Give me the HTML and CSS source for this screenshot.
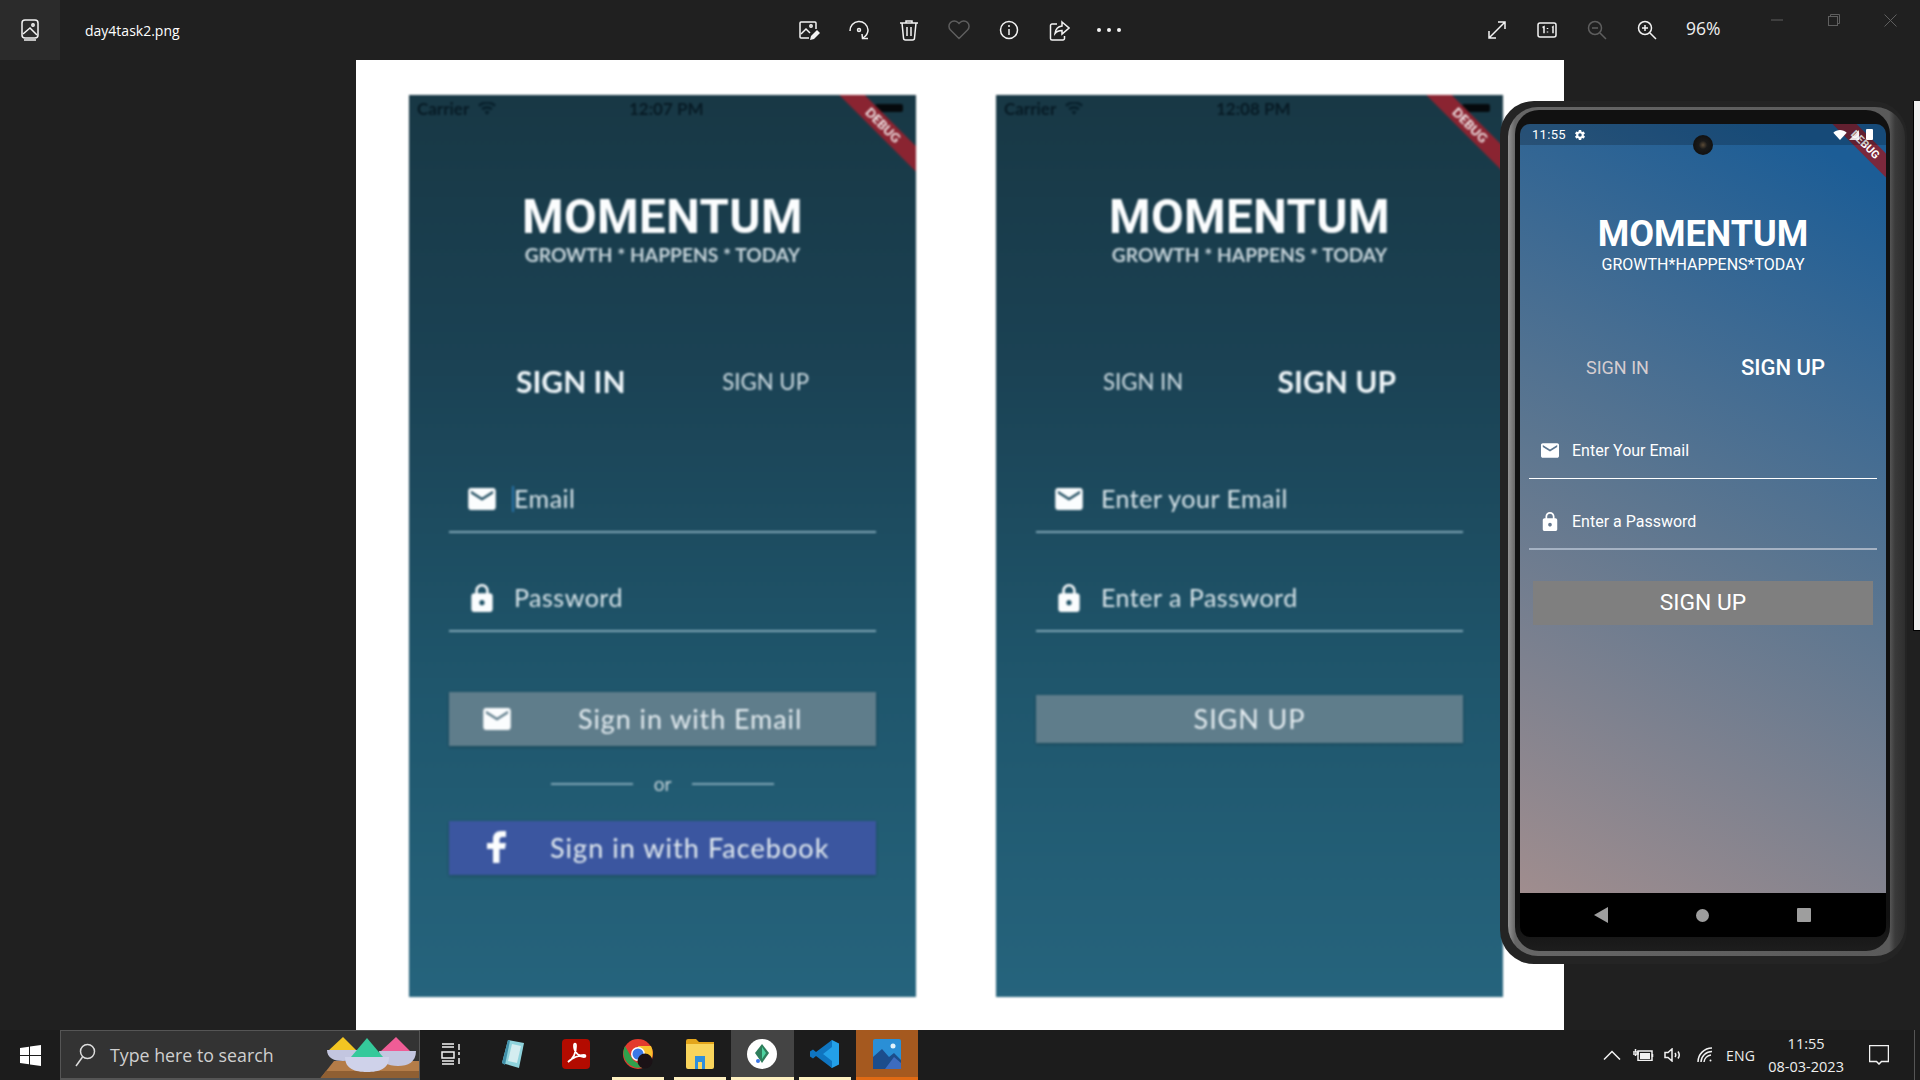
FILE: index.html
```html
<!DOCTYPE html>
<html lang="en">
<head>
<meta charset="utf-8">
<title>day4task2.png</title>
<link rel="stylesheet" href="styles.css">
</head>
<body>
<svg class="defs" width="0" height="0" aria-hidden="true">
  <symbol id="mail" viewBox="2 4 20 16"><path d="M20 4H4c-1.1 0-2 .9-2 2v12c0 1.1.9 2 2 2h16c1.1 0 2-.9 2-2V6c0-1.1-.9-2-2-2zm0 4l-8 5-8-5V6l8 5 8-5v2z"/></symbol>
  <symbol id="lock" viewBox="4 1 16 21"><path d="M18 8h-1V6c0-2.76-2.24-5-5-5S7 3.24 7 6v2H6c-1.1 0-2 .9-2 2v10c0 1.1.9 2 2 2h12c1.1 0 2-.9 2-2V10c0-1.1-.9-2-2-2zm-6 9c-1.1 0-2-.9-2-2s.9-2 2-2 2 .9 2 2-.9 2-2 2zm3.1-9H8.9V6c0-1.71 1.39-3.1 3.1-3.1 1.71 0 3.1 1.39 3.1 3.1v2z"/></symbol>
  <symbol id="wifi" viewBox="0 0 24 18"><path d="M12 18 0 5c6.600-6.600 17.400-6.600 24 0z"/></symbol>
  <symbol id="ioswifi" viewBox="0 0 18 13"><path d="M9 13 6.500 10a3.600 3.600 0 0 1 5 0zM5 8.300 3.200 6.300a8.500 8.500 0 0 1 11.600 0L13 8.300a6 6 0 0 0-8 0zM1.700 4.700 0 2.800a13 13 0 0 1 18 0l-1.700 1.900a10.500 10.500 0 0 0-14.600 0z"/></symbol>
</svg>

<div class="viewer">
  <header class="topbar">
    <div class="app-tile">
      <svg class="ico" width="20" height="22" viewBox="0 0 20 22"><rect x="2" y="1" width="16" height="18" rx="3"/><path d="M4 21h12"/><circle cx="13" cy="6" r="1.200"/><path d="M3 15l7-6 7 7"/></svg>
    </div>
    <div class="file-name">day4task2.png</div>
    <div class="tools">
      <span class="tool"><svg class="ico" width="22" height="22" viewBox="0 0 22 22"><path d="M11 19H3a1 1 0 0 1-1-1V4a1 1 0 0 1 1-1h14a1 1 0 0 1 1 1v6"/><path d="M3 15l5-5 4 4"/><circle cx="13" cy="7" r="1.200"/><path class="solid" d="M12 21l1-4 6-6 3 3-6 6z"/></svg></span>
      <span class="tool"><svg class="ico" width="22" height="22" viewBox="0 0 22 22"><path d="M2 12a9 9 0 1 1 18-1c0 3-2 6-5 8"/><path d="M14 15l.5 4.500H20"/><circle cx="11" cy="11" r="1.500"/></svg></span>
      <span class="tool"><svg class="ico" width="20" height="22" viewBox="0 0 20 22"><path d="M1 4h18M3 4l1.500 15a2 2 0 0 0 2 2h7a2 2 0 0 0 2-2L17 4M7 4V2h6v2M8 8v9M12 8v9"/></svg></span>
      <span class="tool dim"><svg class="ico" width="22" height="20" viewBox="0 0 22 20"><path d="M11 18.500 2.500 10a5.300 5.300 0 0 1 7.500-7.500l1 1 1-1A5.300 5.300 0 0 1 19.500 10z"/></svg></span>
      <span class="tool"><svg class="ico" width="20" height="20" viewBox="0 0 20 20"><circle cx="10" cy="10" r="8.500"/><path d="M10 9v6"/><path d="M10 5v2"/></svg></span>
      <span class="tool"><svg class="ico" width="21" height="21" viewBox="0 0 21 21"><path d="M8 4H3a1.500 1.500 0 0 0-1.500 1.500v13A1.500 1.500 0 0 0 3 20h11a1.500 1.500 0 0 0 1.500-1.500V16"/><path d="M13 2l7 6-7 6v-3.500c-3 0-5 .5-7 3 .5-4 3-7 7-7.500z"/></svg></span>
      <span class="tool dots"><i></i><i></i><i></i></span>
    </div>
    <div class="zooms">
      <span class="tool"><svg class="ico" width="20" height="20" viewBox="0 0 20 20"><path d="M2 18 18 2M11 2h7v7M2 11v7h7"/></svg></span>
      <span class="tool"><svg class="ico" width="20" height="16" viewBox="0 0 20 16"><rect x="1" y="1" width="18" height="14" rx="2"/><path d="M5.500 5.500 7 4.800v6.400M15 5.500l1-.7v6.400"/><path class="thin" d="M10.500 6v1M10.500 9.500v1"/></svg></span>
      <span class="tool dim"><svg class="ico" width="20" height="20" viewBox="0 0 20 20"><circle cx="8" cy="8" r="6.500"/><path d="M13 13l6 6M5 8h6"/></svg></span>
      <span class="tool"><svg class="ico" width="20" height="20" viewBox="0 0 20 20"><circle cx="8" cy="8" r="6.500"/><path d="M13 13l6 6M5 8h6M8 5v6"/></svg></span>
      <span class="zoom-level">96%</span>
    </div>
    <div class="win-controls">
      <span class="win"><svg class="ico" width="12" height="2" viewBox="0 0 12 2"><path d="M0 1h12"/></svg></span>
      <span class="win"><svg class="ico" width="12" height="12" viewBox="0 0 12 12"><rect x=".5" y="2.500" width="9" height="9"/><path d="M2.500 2.500V.5h9v9h-2"/></svg></span>
      <span class="win"><svg class="ico" width="13" height="13" viewBox="0 0 13 13"><path d="M.5.5l12 12M12.500.5l-12 12"/></svg></span>
    </div>
  </header>

  <main class="stage">
    <div class="picture">
      <section class="mock">
        <div class="ribbon">DEBUG</div>
        <div class="ios-status"><span class="carrier">Carrier <svg class="ios-wifi" width="18" height="13"><use href="#ioswifi"/></svg></span><span class="ios-time">12:07 PM</span><span class="ios-batt"></span></div>
        <h1 class="brand">MOMENTUM</h1>
        <p class="tagline">GROWTH * HAPPENS * TODAY</p>
        <div class="tabs"><span class="tab tab-on">SIGN IN</span><span class="tab">SIGN UP</span></div>
        <div class="field field-first"><svg class="f-ico"><use href="#mail"/></svg><span class="caret"></span><span class="f-text">Email</span></div>
        <div class="field"><svg class="f-ico f-lock"><use href="#lock"/></svg><span class="f-text">Password</span></div>
        <div class="btn btn-grey btn-email"><svg class="f-ico"><use href="#mail"/></svg><span>Sign in with Email</span></div>
        <div class="or"><i></i><span>or</span><i></i></div>
        <div class="btn btn-fb"><span class="fb-f"><svg width="20" height="32" viewBox="0 0 20 32"><path d="M6 32V18H0v-6h6V8c0-5 3-8 8-8h5v6h-3c-2.500 0-3.500 1-3.500 3v3H19l-1 6h-5.500v14z"/></svg></span><span>Sign in with Facebook</span></div>
      </section>

      <section class="mock">
        <div class="ribbon">DEBUG</div>
        <div class="ios-status"><span class="carrier">Carrier <svg class="ios-wifi" width="18" height="13"><use href="#ioswifi"/></svg></span><span class="ios-time">12:08 PM</span><span class="ios-batt"></span></div>
        <h1 class="brand">MOMENTUM</h1>
        <p class="tagline">GROWTH * HAPPENS * TODAY</p>
        <div class="tabs"><span class="tab">SIGN IN</span><span class="tab tab-on">SIGN UP</span></div>
        <div class="field field-first"><svg class="f-ico"><use href="#mail"/></svg><span class="f-text">Enter your Email</span></div>
        <div class="field"><svg class="f-ico f-lock"><use href="#lock"/></svg><span class="f-text">Enter a Password</span></div>
        <div class="btn btn-grey btn-signup"><span>SIGN UP</span></div>
      </section>
    </div>
  </main>

  <footer class="taskbar">
    <span class="start"><svg width="21" height="21" viewBox="0 0 21 21"><path fill="#fff" d="M0 3l9-1.300V10H0zM10 1.500 21 0v10H10zM0 11h9v8.300L0 18zM10 11h11v10l-11-1.500z"/></svg></span>
    <div class="search">
      <svg class="ico" width="22" height="24" viewBox="0 0 22 24"><circle cx="13.500" cy="8.500" r="7"/><path d="M8.500 14 2 23"/></svg>
      <span class="search-text">Type here to search</span>
      <svg class="holi" width="100" height="50" viewBox="0 0 100 50"><path fill="#b47c48" d="M0 50 15 31h85v19z"/><path fill="#8f5f33" d="M0 50l7-9h93v9z"/><path fill="#f2c522" d="M9 21 24 7l14 14v4H9z"/><path fill="#c3c6e0" d="M8 20h31c0 8-6 11-15 11S8 28 8 20z"/><path fill="#ef5d96" d="M61 22 77 7l15 15v4H61z"/><path fill="#c3c6e0" d="M60 21h37c0 11-8 15-18 15s-19-4-19-15z"/><path fill="#35c99b" d="M32 27 48 8l16 19v3H32z"/><path fill="#cfd2ea" d="M26 27h44c0 12-10 15-22 15s-22-3-22-15z"/></svg>
    </div>
    <div class="task-items">
      <span class="task"><svg class="ico" width="20" height="22" viewBox="0 0 20 22"><path d="M1 1h12M1 4h12M1 9h12v6H1zM1 18h12M1 21h12M18 1v6M18 9v3M18 15v6"/></svg></span>
      <span class="task"><svg width="26" height="30" viewBox="0 0 26 30"><path fill="#8fd3dc" d="M8 1l16 3-5 25L2 24z"/><path fill="#3f8fa8" d="M2 24l6-23 2 .4L5 26z"/><path fill="#d4edf0" d="M12 5l9 2-4 17-9-2z"/></svg></span>
      <span class="task"><svg width="28" height="30" viewBox="0 0 28 30"><rect width="28" height="30" rx="4" fill="#b30b00"/><path fill="none" stroke="#fff" stroke-width="1.800" d="M6 23c5-3 8-9 8-16 0-3-2-3-2 0 0 6 5 11 10 11 2 0 2-2 0-2-5 0-12 3-16 7z"/></svg></span>
      <span class="task task-open"><svg width="32" height="32" viewBox="0 0 32 32"><circle cx="16" cy="16" r="15" fill="#e33b2e"/><path fill="#f9c22e" d="M16 8h13a15 15 0 0 1-8 21z"/><path fill="#2fa14c" d="M3 8l8 14 10 7A15 15 0 0 1 3 8z"/><circle cx="16" cy="16" r="7" fill="#fff"/><circle cx="16" cy="16" r="5.500" fill="#3b78e7"/><circle cx="23" cy="23" r="7.500" fill="#1b1216"/></svg></span>
      <span class="task task-open"><svg width="28" height="30" viewBox="0 0 28 30"><path fill="#e3a51b" d="M0 2a2 2 0 0 1 2-2h8l3 3h15v5H0z"/><path fill="#f9d55c" d="M0 5h28v23a2 2 0 0 1-2 2H2a2 2 0 0 1-2-2z"/><path fill="#2f8fdc" d="M9 17h10v13h-3v-7h-4v7H9z"/></svg></span>
      <span class="task task-active task-open"><svg width="30" height="30" viewBox="0 0 30 30"><circle cx="15" cy="15" r="15" fill="#fff"/><path fill="#2e7d5b" d="M15 5l7 9-7 10-7-10z"/><path fill="#4cd3a0" d="M15 8l4 6-4 6z"/><circle cx="11" cy="22" r="2" fill="#3b78e7"/></svg></span>
      <span class="task task-open"><svg width="30" height="30" viewBox="0 0 30 30"><path fill="#23a0e8" d="M22 1l7 3.500v21L22 29 9 17z"/><path fill="#0f75c0" d="M22 8 13 15l9 7v7L6 17l-3 2.500L0 17.500v-5L3 10.500l3 2.500L22 1z"/></svg></span>
      <span class="task task-photos"><svg width="28" height="30" viewBox="0 0 28 30"><rect width="28" height="30" rx="2" fill="#2a8fd6"/><path fill="#1c4d8c" d="M0 30V18l9-8 7 8 5-4 7 7v9z"/><path fill="#3d6cc0" d="M12 30l9-12 7 6v6z"/><circle cx="20" cy="7" r="2.500" fill="#e2f3fb"/></svg></span>
    </div>
    <div class="tray">
      <svg class="ico" width="18" height="10" viewBox="0 0 18 10"><path d="M1 9.500l8-8 8 8"/></svg>
      <svg class="ico batt" width="21" height="12" viewBox="0 0 21 12"><rect x="5" y="2" width="14" height="9.500"/><rect class="solid" x="7" y="4" width="10" height="6"/><path d="M19.500 5v3M2.500 0v3M0 3h5v2H0M2.500 5v2"/></svg>
      <svg class="ico" width="20" height="14" viewBox="0 0 20 14"><path d="M1 4.500h3L8 1v12L4 9.500H1zM11 5q1.500 2 0 4M14 3.500q2.500 3.500 0 7"/></svg>
      <svg class="ico" width="16" height="16" viewBox="0 0 16 16"><path d="M1 15a14 14 0 0 1 14-14M4 15A11 11 0 0 1 15 4.500M7 15a8 8 0 0 1 7-7"/><circle class="solid" cx="13.500" cy="13.500" r="1"/></svg>
      <span class="lang">ENG</span>
      <span class="clock"><span>11:55</span><span>08-03-2023</span></span>
      <svg class="ico notif" width="20" height="20" viewBox="0 0 20 20"><path d="M.5.500h19v16h-7l-2.500 2.500-2.500-2.500h-7z"/></svg>
      <span class="desk-line"></span>
    </div>
  </footer>
</div>

<div class="phone">
  <div class="phone-rim">
    <div class="phone-bezel">
      <div class="screen">
        <div class="ribbon ribbon-sm">DEBUG</div>
        <div class="camera"></div>
        <div class="a-status">
          <span class="a-time">11:55</span>
          <svg class="gear" width="12" height="12" viewBox="0 0 24 24"><path d="M19.400 13c.04-.33.060-.66.060-1s-.02-.67-.060-1l2.100-1.650a.5.500 0 0 0 .12-.64l-2-3.460a.5.500 0 0 0-.61-.22l-2.490 1a7.300 7.300 0 0 0-1.690-.98l-.38-2.650A.49.490 0 0 0 14 2h-4a.49.490 0 0 0-.49.420l-.38 2.650c-.61.25-1.170.59-1.690.98l-2.490-1a.5.500 0 0 0-.61.22l-2 3.460a.49.490 0 0 0 .12.64L4.570 11c-.04.33-.07.66-.07 1s.03.67.07 1l-2.110 1.650a.5.500 0 0 0-.12.64l2 3.460c.12.22.39.3.61.22l2.490-1c.52.4 1.080.73 1.690.98l.38 2.650c.03.24.24.42.49.420h4c.25 0 .46-.18.49-.42l.38-2.650c.61-.25 1.170-.59 1.690-.98l2.490 1c.22.08.49 0 .61-.22l2-3.460a.5.500 0 0 0-.12-.64zM12 15.500a3.500 3.500 0 1 1 0-7 3.500 3.500 0 0 1 0 7z"/></svg>
          <span class="a-icons">
            <svg class="a-wifi" width="14" height="10"><use href="#wifi"/></svg>
            <svg class="a-signal" width="10" height="10" viewBox="0 0 10 10"><path d="M10 0v10H0z"/></svg>
            <span class="a-batt"></span>
          </span>
        </div>
        <h2 class="p-brand">MOMENTUM</h2>
        <p class="p-tagline">GROWTH*HAPPENS*TODAY</p>
        <div class="p-tabs"><span class="p-tab">SIGN IN</span><span class="p-tab p-tab-on">SIGN UP</span></div>
        <div class="p-field p-field-first"><svg class="p-ico"><use href="#mail"/></svg><span>Enter Your Email</span></div>
        <div class="p-field p-field-dim"><svg class="p-ico p-ico-lock"><use href="#lock"/></svg><span>Enter a Password</span></div>
        <div class="p-btn">SIGN UP</div>
      </div>
      <nav class="a-nav">
        <svg width="14" height="16" viewBox="0 0 14 16"><path d="M14 0v16L0 8z"/></svg>
        <svg width="13" height="13" viewBox="0 0 13 13"><circle cx="6.500" cy="6.500" r="6.500"/></svg>
        <svg width="14" height="14" viewBox="0 0 14 14"><rect width="14" height="14" rx="1"/></svg>
      </nav>
    </div>
  </div>
</div>
<div class="emu-strip"></div>
</body>
</html>
```

FILE: styles.css
```css
* { box-sizing: border-box; }
html, body { margin: 0; padding: 0; height: 100%; }
body { background: #202020; color: #fff; font-family: "Open Sans", "Liberation Sans", sans-serif; overflow: hidden; }
.defs { position: absolute; }
.ico { fill: none; stroke: #f2f2f2; stroke-width: 1.5; display: block; }
.ico .solid { fill: #f2f2f2; stroke: none; }
.ico .thin { stroke-width: 1.5; }

.viewer { display: flex; flex-direction: column; width: 1920px; height: 1080px; }

/* top bar */
.topbar { height: 60px; flex: none; display: flex; align-items: center; background: #202020; }
.app-tile { width: 60px; height: 60px; background: #2b2b2b; display: flex; align-items: center; justify-content: center; }
.file-name { width: 699px; margin-left: 25px; font-size: 14px; line-height: 60px; color: #fff; padding-top: 1px; }
.tools { display: flex; width: 688px; }
.zooms { display: flex; align-items: center; width: 276px; }
.tool { width: 50px; height: 60px; display: flex; align-items: center; justify-content: center; }
.dim .ico { stroke: #5e5e5e; }
.dots { gap: 4px; }
.dots i { width: 4px; height: 4px; border-radius: 50%; background: #f2f2f2; margin: 0 1px; }
.zoom-level { width: 76px; padding-left: 14px; font-size: 17.5px; color: #eee; padding-bottom: 4px; }
.win-controls { display: flex; margin-top: -20px; }
.win { width: 57px; height: 40px; display: flex; align-items: center; justify-content: center; }
.win .ico { stroke: #5f5f5f; stroke-width: 1; }

/* picture */
.stage { flex: none; height: 970px; padding-left: 356px; }
.picture { width: 1208px; height: 970px; background: #fff; padding: 35px 61px 33px 53px; display: flex; gap: 80px; }
.mock { position: relative; width: 507px; height: 902px; overflow: hidden; filter: blur(.8px); font-family: Lato, "Liberation Sans", sans-serif; color: #f2f7f9; background: linear-gradient(180deg, #183845 0%, #1b4254 30%, #1f566c 65%, #26647d 100%); }
.ribbon { position: absolute; top: 23px; right: -48px; width: 160px; height: 18px; padding-right: 4px; background: #8a2431; color: #fff; font: 700 12.5px/18px Lato, sans-serif; text-align: center; transform: rotate(45deg); }
.ios-status { height: 26px; padding: 0 13px 0 8px; display: flex; justify-content: space-between; align-items: center; color: #071a24; font-size: 17px; font-weight: 700; }
.carrier { display: flex; align-items: center; gap: 9px; width: 212px; }
.ios-wifi { fill: #08202c; }
.ios-time { flex: 1; }
.ios-batt { width: 28px; height: 8px; background: #05090c; border-radius: 2px; }
.brand { margin: 71px 0 0; height: 49px; font-family: Roboto, sans-serif; font-size: 47.5px; line-height: 50px; font-weight: 700; text-align: center; letter-spacing: .4px; color: #fbfdfe; }
.tagline { margin: 0; height: 28px; font-size: 19.2px; line-height: 28px; font-weight: 700; text-align: center; color: #c6d4da; }
.tabs { margin-top: 92px; height: 40px; padding: 0 107px; display: flex; justify-content: space-between; align-items: center; font-size: 22.2px; color: #cfdde3; }
.tab-on { font-size: 30px; font-weight: 700; color: #eef5f8; }
.field { height: 61px; margin: 38px 40px 0; padding: 0 0 6px 19px; display: flex; align-items: center; gap: 18px; border-bottom: 2px solid #7fa5b5; font-size: 25px; color: #d9e5ea; position: relative; letter-spacing: .5px; }
.field-first { margin-top: 71px; }
.f-text { margin-top: -2px; }
.f-ico { width: 28px; height: 22px; fill: #fbfdfe; flex: none; }
.f-lock { height: 28px; }
.caret { position: absolute; left: 63px; top: 14px; width: 2px; height: 26px; background: #2671a8; }
.btn { display: flex; align-items: center; margin: 0 40px; height: 54px; padding-left: 34px; font-size: 27px; color: #e4ecf0; letter-spacing: .9px; }
.btn span { margin-top: -2px; }
.btn-grey { background: #5f7d8b; margin-top: 60px; box-shadow: 0 1px 3px rgba(0,0,0,.25); }
.btn-email { gap: 67px; }
.btn-signup { justify-content: center; height: 48px; margin-top: 63px; padding: 0; }
.or { display: flex; justify-content: center; align-items: center; height: 75px; gap: 21px; font-size: 19px; color: #c6d4da; }
.or i { width: 82px; height: 2px; background: #7fa5b5; }
.btn-fb { background: #3b56a0; gap: 39px; box-shadow: 0 1px 3px rgba(0,0,0,.25); letter-spacing: 1.05px; }
.fb-f { width: 28px; display: flex; justify-content: center; }
.fb-f svg { fill: #fbfdfe; display: block; }

/* taskbar */
.taskbar { flex: none; height: 50px; display: flex; align-items: center; background: #1c1c1c; }
.start { width: 60px; display: flex; justify-content: center; }
.search { position: relative; width: 360px; height: 50px; background: #333; border: 1px solid #555; border-bottom-width: 2px; display: flex; align-items: center; padding-left: 13px; overflow: hidden; }
.search .ico { stroke: #ddd; }
.search-text { margin-left: 14px; font-size: 17.8px; color: #cfcfcf; }
.holi { position: absolute; right: 0; top: -1px; }
.task-items { display: flex; width: 498px; height: 50px; }
.task { flex: 1; display: flex; align-items: center; justify-content: center; border-bottom: 3px solid transparent; }
.task-open { position: relative; }
.task-open::after { content: ""; position: absolute; left: 5px; right: 5px; bottom: -3px; height: 3px; background: #fdf0c0; }
.task-active { background: #444; }
.task-active::after { left: 0; right: 0; }
.task-photos { background: #a5591f; border-bottom-color: #e06a14; }
.tray { flex: 1; display: flex; align-items: center; padding-left: 685px; height: 50px; font-size: 15px; color: #eee; position: relative; }
.tray .ico { flex: none; }
.tray .batt { margin-left: 12px; }
.tray .batt + .ico { margin-left: 10px; }
.tray .batt + .ico + .ico { margin-left: 13px; }
.lang { margin-left: 13px; font-size: 14px; letter-spacing: .2px; }
.clock { width: 90px; margin-left: 6px; display: flex; flex-direction: column; align-items: center; font-size: 14.5px; line-height: 23px; }
.notif { margin-left: 18px; }
.desk-line { position: absolute; right: 5px; width: 1px; height: 50px; background: #555; }

/* phone emulator */
.phone { position: absolute; left: 1500px; top: 101px; width: 407px; height: 863px; padding: 6px 2px 8px 8px; background: #242424; border-radius: 34px; font-family: Roboto, "Liberation Sans", sans-serif; }
.phone-rim { height: 100%; padding: 3px 15px 5px 7px; background: linear-gradient(90deg, #949494 0, #666 1.8%, #5a5a5a 96%, #3a3a3a 97.5%, #2e2e2e 100%); border-radius: 30px; }
.phone-bezel { display: flex; flex-direction: column; height: 100%; padding: 14px 4px 14px 5px; background: linear-gradient(180deg, #111 0, #111 96%, #1d1d1d 100%); border-radius: 24px; }
.screen { position: relative; flex: 1; overflow: hidden; border-radius: 10px 10px 0 0; background: linear-gradient(208deg, #1c5d96 6%, #5c7690 52%, #a08d8e 100%); color: #fff; }
.camera { position: absolute; left: 173px; top: 11px; width: 20px; height: 20px; border-radius: 50%; background: radial-gradient(circle at 50% 50%, #5a4a36 0, #1a1a1a 30%, #0b0b0b 100%); z-index: 2; }
.ribbon-sm { top: 15px; right: -42px; width: 120px; height: 17px; padding-right: 8px; background: rgba(140,30,45,.85); font: 700 11px/17px Roboto, sans-serif; }
.a-status { position: relative; height: 21px; padding: 0 13px 0 12px; display: flex; align-items: center; background: rgba(0,0,0,.2); font-size: 13px; letter-spacing: .3px; }
.gear { fill: #fff; margin-left: 8px; }
.a-icons { margin-left: auto; display: flex; align-items: center; gap: 2px; }
.a-wifi { fill: #fff; }
.a-signal { fill: rgba(255,255,255,.85); margin-right: 5px; }
.a-batt { width: 7px; height: 11px; background: #fff; border-radius: 1px; }
.p-brand { margin: 71px 0 0; height: 38px; line-height: 37px; font-size: 36px; font-weight: 700; text-align: center; }
.p-tagline { margin: 0; height: 22px; line-height: 22px; font-size: 16px; text-align: center; }
.p-tabs { margin-top: 76px; height: 30px; padding: 0 61px 0 66px; display: flex; justify-content: space-between; align-items: center; font-size: 18px; color: #d6cdd0; }
.p-tab-on { font-size: 22px; font-weight: 500; color: #fff; }
.p-field { height: 44px; margin: 27px 9px 0; padding: 0 0 12px 12px; display: flex; align-items: center; gap: 13px; font-size: 16px; border-bottom: 1px solid #fff; }
.p-field-first { margin-top: 53px; }
.p-field-dim { border-bottom: 2px solid #a5b2c3; }
.p-ico { width: 18px; height: 15px; fill: #fff; flex: none; }
.p-ico-lock { height: 19px; }
.p-btn { margin: 31px 13px 0; height: 44px; background: #7f7f7f; font-size: 22.8px; line-height: 44px; text-align: center; }
.a-nav { flex: none; height: 44px; background: #000; border-radius: 0 0 10px 10px; display: flex; align-items: center; justify-content: space-between; padding: 0 75px 0 74px; }
.a-nav svg { fill: #9e9e9e; display: block; }
.emu-strip { position: absolute; left: 1913px; top: 101px; width: 7px; height: 530px; background: #f1f1f1; border-left: 1px solid #000; border-bottom: 1px solid #000; }
```
